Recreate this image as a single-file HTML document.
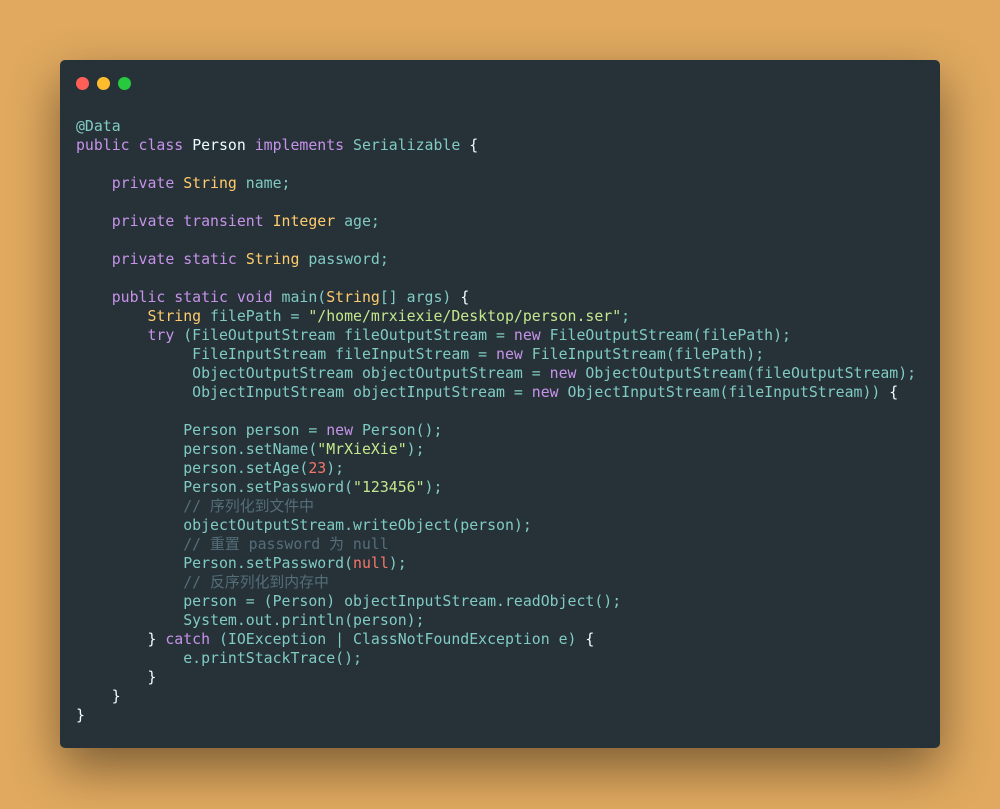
<!DOCTYPE html>
<html><head><meta charset="utf-8"><style>
body{margin:0;width:1000px;height:809px;background:#e0a95f;overflow:hidden}
.win{position:absolute;left:60px;top:60px;width:880px;height:688px;background:#263238;border-radius:5px;box-shadow:0 20px 50px rgba(0,0,0,.45)}
.d{position:absolute;top:17px;width:13px;height:13px;border-radius:50%}
pre{position:absolute;left:16px;top:57px;margin:0;font-family:"DejaVu Sans Mono","Liberation Mono","Noto Sans CJK SC",monospace;font-size:14.85px;line-height:19px;color:#80cbc4}
.k{color:#c792ea}.t{color:#ffcb6b}.w{color:#eeffff}.s{color:#c3e88d}.n{color:#f77669}.c{color:#546e7a}
</style></head><body><div class="win">
<div class="d" style="left:16px;background:#ff5f56"></div><div class="d" style="left:37px;background:#ffbd2e"></div><div class="d" style="left:58px;background:#27c93f"></div>
<pre>@Data
<span class="k">public class</span> <span class="w">Person</span> <span class="k">implements</span> Serializable <span class="w">{</span>

    <span class="k">private</span> <span class="t">String</span> name;

    <span class="k">private transient</span> <span class="t">Integer</span> age;

    <span class="k">private static</span> <span class="t">String</span> password;

    <span class="k">public static void</span> main(<span class="t">String</span>[] args) <span class="w">{</span>
        <span class="t">String</span> filePath = <span class="s">"/home/mrxiexie/Desktop/person.ser"</span>;
        <span class="k">try</span> (FileOutputStream fileOutputStream = <span class="k">new</span> FileOutputStream(filePath);
             FileInputStream fileInputStream = <span class="k">new</span> FileInputStream(filePath);
             ObjectOutputStream objectOutputStream = <span class="k">new</span> ObjectOutputStream(fileOutputStream);
             ObjectInputStream objectInputStream = <span class="k">new</span> ObjectInputStream(fileInputStream)) <span class="w">{</span>

            Person person = <span class="k">new</span> Person();
            person.setName(<span class="s">"MrXieXie"</span>);
            person.setAge(<span class="n">23</span>);
            Person.setPassword(<span class="s">"123456"</span>);
            <span class="c">// 序列化到文件中</span>
            objectOutputStream.writeObject(person);
            <span class="c">// 重置 password 为 null</span>
            Person.setPassword(<span class="n">null</span>);
            <span class="c">// 反序列化到内存中</span>
            person = (Person) objectInputStream.readObject();
            System.out.println(person);
        <span class="w">}</span> <span class="k">catch</span> (IOException | ClassNotFoundException e) <span class="w">{</span>
            e.printStackTrace();
        <span class="w">}</span>
    <span class="w">}</span>
<span class="w">}</span></pre></div></body></html>
